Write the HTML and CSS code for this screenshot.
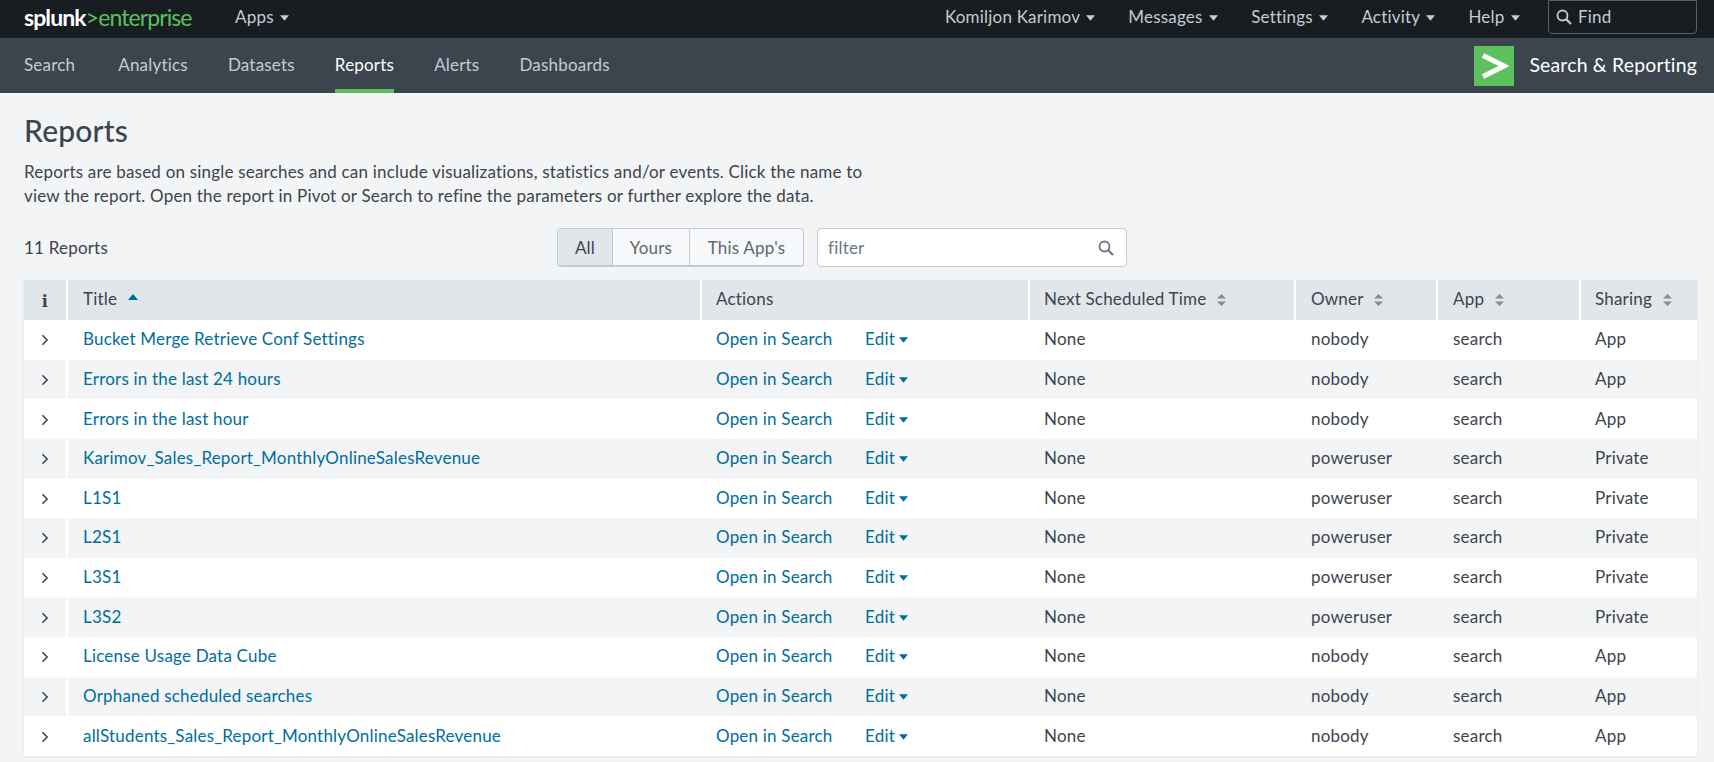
FILE: index.html
```html
<!DOCTYPE html>
<html lang="en">
<head>
  <meta charset="UTF-8">
  <title>Reports | Splunk</title>
  <link rel="stylesheet" href="styles.css">
</head>
<body>
  <svg class="defs" width="0" height="0">
    <symbol id="caret" viewBox="0 0 10 6"><path d="M0 0h10L5 6z"/></symbol>
    <symbol id="sort" viewBox="0 0 9 12"><path d="M4.5 0L9 4.5H0zM0 7.5h9L4.5 12z"/></symbol>
    <symbol id="chev" viewBox="0 0 9 14"><path d="M1.5 1.5L7 7l-5.500 5.500" fill="none" stroke="currentColor" stroke-width="1.800"/></symbol>
    <symbol id="mag" viewBox="0 0 16 16"><circle cx="6.500" cy="6.500" r="5" fill="none" stroke="currentColor" stroke-width="1.800"/><path d="M10.200 10.200L15 15" stroke="currentColor" stroke-width="2.200"/></symbol>
  </svg>

  <header class="topbar">
    <a class="brand">splunk<span class="brand-green">&gt;enterprise</span></a>
    <a class="top-link apps">Apps <svg class="caret"><use href="#caret"/></svg></a>
    <div class="top-right">
      <a class="top-link">Komiljon Karimov <svg class="caret"><use href="#caret"/></svg></a>
      <a class="top-link">Messages <svg class="caret"><use href="#caret"/></svg></a>
      <a class="top-link">Settings <svg class="caret"><use href="#caret"/></svg></a>
      <a class="top-link">Activity <svg class="caret"><use href="#caret"/></svg></a>
      <a class="top-link">Help <svg class="caret"><use href="#caret"/></svg></a>
      <div class="find"><svg class="find-icon"><use href="#mag"/></svg>Find</div>
    </div>
  </header>

  <nav class="appbar">
    <a class="nav-item">Search</a>
    <a class="nav-item">Analytics</a>
    <a class="nav-item">Datasets</a>
    <a class="nav-item active">Reports</a>
    <a class="nav-item">Alerts</a>
    <a class="nav-item">Dashboards</a>
    <div class="app-title">
      <svg class="app-logo" viewBox="0 0 40 40"><rect width="40" height="40" fill="#5cc05c"/><path d="M9 9.500L30 20 9 30.500" fill="none" stroke="#fff" stroke-width="5"/></svg>
      <span class="app-name">Search &amp; Reporting</span>
    </div>
  </nav>

  <main class="content">
    <h1>Reports</h1>
    <p class="intro">Reports are based on single searches and can include visualizations, statistics and/or events. Click the name to<br>view the report. Open the report in Pivot or Search to refine the parameters or further explore the data.</p>

    <div class="toolbar">
      <span class="count">11 Reports</span>
      <div class="btn-group">
        <span class="btn selected">All</span>
        <span class="btn">Yours</span>
        <span class="btn">This App's</span>
      </div>
      <div class="filter">filter<svg class="filter-icon"><use href="#mag"/></svg></div>
    </div>

    <table class="reports">
      <thead>
        <tr>
          <th class="col-info"><span class="info">i</span></th>
          <th class="col-title">Title <svg class="sort-up" viewBox="0 0 10 6"><path d="M0 6h10L5 0z"/></svg></th>
          <th class="col-actions">Actions</th>
          <th class="col-next">Next Scheduled Time <svg class="sort"><use href="#sort"/></svg></th>
          <th class="col-owner">Owner <svg class="sort"><use href="#sort"/></svg></th>
          <th class="col-app">App <svg class="sort"><use href="#sort"/></svg></th>
          <th class="col-sharing">Sharing <svg class="sort"><use href="#sort"/></svg></th>
        </tr>
      </thead>
      <tbody>
        <tr><td class="exp"><svg class="chev"><use href="#chev"/></svg></td><td><a>Bucket Merge Retrieve Conf Settings</a></td><td><a class="open">Open in Search</a><a>Edit <svg class="caret"><use href="#caret"/></svg></a></td><td>None</td><td>nobody</td><td>search</td><td>App</td></tr>
        <tr><td class="exp"><svg class="chev"><use href="#chev"/></svg></td><td><a>Errors in the last 24 hours</a></td><td><a class="open">Open in Search</a><a>Edit <svg class="caret"><use href="#caret"/></svg></a></td><td>None</td><td>nobody</td><td>search</td><td>App</td></tr>
        <tr><td class="exp"><svg class="chev"><use href="#chev"/></svg></td><td><a>Errors in the last hour</a></td><td><a class="open">Open in Search</a><a>Edit <svg class="caret"><use href="#caret"/></svg></a></td><td>None</td><td>nobody</td><td>search</td><td>App</td></tr>
        <tr><td class="exp"><svg class="chev"><use href="#chev"/></svg></td><td><a>Karimov_Sales_Report_MonthlyOnlineSalesRevenue</a></td><td><a class="open">Open in Search</a><a>Edit <svg class="caret"><use href="#caret"/></svg></a></td><td>None</td><td>poweruser</td><td>search</td><td>Private</td></tr>
        <tr><td class="exp"><svg class="chev"><use href="#chev"/></svg></td><td><a>L1S1</a></td><td><a class="open">Open in Search</a><a>Edit <svg class="caret"><use href="#caret"/></svg></a></td><td>None</td><td>poweruser</td><td>search</td><td>Private</td></tr>
        <tr><td class="exp"><svg class="chev"><use href="#chev"/></svg></td><td><a>L2S1</a></td><td><a class="open">Open in Search</a><a>Edit <svg class="caret"><use href="#caret"/></svg></a></td><td>None</td><td>poweruser</td><td>search</td><td>Private</td></tr>
        <tr><td class="exp"><svg class="chev"><use href="#chev"/></svg></td><td><a>L3S1</a></td><td><a class="open">Open in Search</a><a>Edit <svg class="caret"><use href="#caret"/></svg></a></td><td>None</td><td>poweruser</td><td>search</td><td>Private</td></tr>
        <tr><td class="exp"><svg class="chev"><use href="#chev"/></svg></td><td><a>L3S2</a></td><td><a class="open">Open in Search</a><a>Edit <svg class="caret"><use href="#caret"/></svg></a></td><td>None</td><td>poweruser</td><td>search</td><td>Private</td></tr>
        <tr><td class="exp"><svg class="chev"><use href="#chev"/></svg></td><td><a>License Usage Data Cube</a></td><td><a class="open">Open in Search</a><a>Edit <svg class="caret"><use href="#caret"/></svg></a></td><td>None</td><td>nobody</td><td>search</td><td>App</td></tr>
        <tr><td class="exp"><svg class="chev"><use href="#chev"/></svg></td><td><a>Orphaned scheduled searches</a></td><td><a class="open">Open in Search</a><a>Edit <svg class="caret"><use href="#caret"/></svg></a></td><td>None</td><td>nobody</td><td>search</td><td>App</td></tr>
        <tr><td class="exp"><svg class="chev"><use href="#chev"/></svg></td><td><a>allStudents_Sales_Report_MonthlyOnlineSalesRevenue</a></td><td><a class="open">Open in Search</a><a>Edit <svg class="caret"><use href="#caret"/></svg></a></td><td>None</td><td>nobody</td><td>search</td><td>App</td></tr>
      </tbody>
    </table>
  </main>
</body>
</html>
```

FILE: styles.css
```css
html, body {
  height: 100%;
  overflow: hidden;
}
body {
  margin: 0;
  background: #f2f4f5;
  color: #3c444d;
  font-family: "Lato", "Liberation Sans", sans-serif;
  font-size: 17px;
  letter-spacing: 0.2px;
}
.defs {
  position: absolute;
}
.caret {
  width: 9px;
  height: 6px;
  margin-left: 2px;
  fill: currentColor;
  vertical-align: 2px;
}

.topbar {
  display: flex;
  align-items: center;
  box-sizing: border-box;
  height: 38px;
  padding: 0 0 5px 24px;
  background: #171d21;
  color: #c3cbd4;
}
.brand {
  width: 211px;
  color: #fff;
  font-size: 23px;
  font-weight: 700;
  letter-spacing: -0.9px;
}
.brand-green {
  color: #5cc05c;
  font-weight: 400;
}
.top-right {
  display: flex;
  align-items: center;
  gap: 33px;
  margin-left: auto;
  padding-right: 17px;
}
.find {
  display: flex;
  align-items: center;
  box-sizing: border-box;
  width: 149px;
  height: 34px;
  margin-left: -5px;
  padding-left: 7px;
  border: 1px solid #56606b;
  border-radius: 0 0 4px 4px;
}
.find-icon {
  width: 16px;
  height: 16px;
  margin-right: 6px;
}

.appbar {
  display: flex;
  height: 55px;
  padding-left: 24px;
  padding-right: 17px;
  background: #3c444d;
  color: #c3cbd4;
}
.nav-item {
  display: flex;
  align-items: center;
  box-sizing: border-box;
  height: 55px;
  margin-right: 40px;
  border-bottom: 4px solid transparent;
  padding-top: 2px;
}
.nav-item:first-child {
  margin-right: 43px;
}
.nav-item.active {
  border-bottom-color: #5cc05c;
  color: #fff;
}
.app-title {
  display: flex;
  align-items: center;
  gap: 15px;
  margin-left: auto;
  color: #fff;
  font-size: 19.4px;
}
.app-logo {
  width: 40px;
  height: 40px;
}
.app-name {
  margin-bottom: 2px;
}

.content {
  padding: 0 17px 0 24px;
}
h1 {
  margin: 19px 0 0;
  font-size: 30px;
  font-weight: 500;
  line-height: 36px;
}
.intro {
  margin: 12px 0 0;
  line-height: 24px;
}
.toolbar {
  display: flex;
  align-items: center;
  height: 39px;
  margin-top: 20px;
}
.count {
  width: 533px;
}
.btn-group {
  display: flex;
  box-sizing: border-box;
  width: 247px;
  height: 39px;
  border: 1px solid #c3cbd4;
  border-bottom-width: 2px;
  border-radius: 4px;
  background: #f7f8fa;
  color: #5c6773;
}
.btn {
  display: flex;
  align-items: center;
  justify-content: center;
  flex: 0 0 76px;
  border-left: 1px solid #c3cbd4;
}
.btn:first-child {
  flex-basis: 54px;
  border-left: none;
}
.btn:last-child {
  flex: 1;
}
.btn.selected {
  background: #e1e6eb;
  color: #3c444d;
}
.filter {
  display: flex;
  align-items: center;
  justify-content: space-between;
  box-sizing: border-box;
  width: 310px;
  height: 39px;
  margin-left: 13px;
  padding: 0 12px 0 10px;
  border: 1px solid #c3cbd4;
  border-radius: 4px;
  background: #fff;
  color: #6b7785;
}
.filter-icon {
  width: 16px;
  height: 16px;
}

.reports {
  width: 1673px;
  margin-top: 13px;
  border-collapse: collapse;
  table-layout: fixed;
  box-shadow: 0 1px 2px rgba(0, 0, 0, 0.08);
}
.reports th, .reports td {
  box-sizing: border-box;
}
.reports th {
  height: 40px;
  padding: 0 15px 3px;
  border-left: 2px solid #fff;
  background: #e1e6eb;
  font-weight: 400;
  text-align: left;
}
.reports th:first-child {
  border-left: none;
}
.col-info {
  width: 43px;
}
.col-title {
  width: 634px;
}
.col-actions {
  width: 328px;
}
.col-next {
  width: 266px;
}
.col-owner {
  width: 142px;
}
.col-app {
  width: 143px;
}
.info {
  font-family: "DejaVu Serif", serif;
  font-size: 16px;
  font-weight: 700;
}
th.col-info {
  padding: 0;
  text-align: center;
}
.sort, .sort-up {
  width: 9px;
  height: 12px;
  margin-left: 6px;
  fill: #818d99;
  vertical-align: -1px;
}
.sort-up {
  width: 10px;
  height: 6px;
  margin-left: 6px;
  fill: #006d9c;
  vertical-align: 5px;
}
.reports td {
  height: 39.64px;
  padding: 0 15px 2px;
  border-left: 2px solid transparent;
  white-space: nowrap;
}
.reports td:nth-child(2) {
  border-left-color: #fff;
}
.reports .col-actions, .reports td:nth-child(3),
.reports .col-next, .reports td:nth-child(4),
.reports .col-sharing, .reports td:nth-child(7) {
  padding-left: 14px;
}
.reports tbody tr {
  background: #fff;
}
.reports tbody tr:nth-child(even) {
  background: #f2f4f5;
}
.reports td.exp {
  padding: 0;
  border-left: none;
  text-align: center;
}
.chev {
  width: 8px;
  height: 12px;
  vertical-align: 0;
}
.reports a {
  color: #006d9c;
}
.open {
  display: inline-block;
  width: 149px;
}
.reports td .caret {
  margin-left: -1px;
}
```
